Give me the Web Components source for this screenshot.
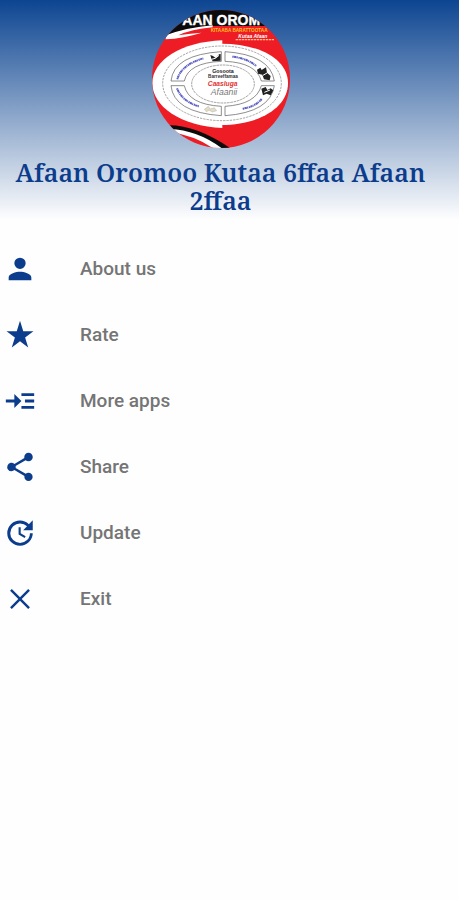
<!DOCTYPE html>
<html lang="om">
<head>
<meta charset="utf-8">
<meta name="viewport" content="width=device-width, initial-scale=1">
<title>Afaan Oromoo Kutaa 6ffaa</title>
<style>
  body {
    margin: 0;
    background: #fefefe;
    font-family: Roboto, sans-serif;
  }
</style>
</head>
<body>
<app-drawer>
  <drawer-header slot="header">Afaan Oromoo Kutaa 6ffaa Afaan 2ffaa</drawer-header>
  <drawer-item icon="person">About us</drawer-item>
  <drawer-item icon="star">Rate</drawer-item>
  <drawer-item icon="more">More apps</drawer-item>
  <drawer-item icon="share">Share</drawer-item>
  <drawer-item icon="update">Update</drawer-item>
  <drawer-item icon="close">Exit</drawer-item>
</app-drawer>

<script>
const ICONS = {
  person: '<path d="M12 12a4 4 0 1 0 0-8 4 4 0 0 0 0 8zm0 2c-2.67 0-8 1.34-8 4v2h16v-2c0-2.66-5.33-4-8-4z"/>',
  star: '<path d="M12 2l2.300 7.400H21.500l-5.900 4.300 2.200 7.100L12 16.400l-5.800 4.400 2.200-7.100L2.500 9.400h7.200z"/>',
  more: '<path d="M2 11h6V7l5 5-5 5v-4H2zM13 6.500h9v2h-9zM15.500 11H22v2h-6.500zM13 15.500h9v2h-9z"/>',
  share: '<path d="M18 16.080c-.76 0-1.440.3-1.960.77L8.910 12.700c.05-.23.09-.46.09-.7s-.04-.47-.09-.7l7.050-4.110c.54.5 1.250.81 2.040.81a3 3 0 1 0-3-3c0 .24.04.47.09.7L8.040 9.810A3 3 0 1 0 6 15c.79 0 1.500-.31 2.040-.81l7.120 4.160c-.05.21-.08.43-.08.65A2.920 2.920 0 1 0 18 16.080z"/>',
  update: '<path d="M21 10.120h-6.780l2.740-2.820a7.020 7.020 0 0 0-9.800-.1 6.880 6.880 0 0 0 0 9.790 7.020 7.020 0 0 0 9.800 0C18.320 15.650 19 14.080 19 12.100h2c0 1.980-.88 4.550-2.640 6.290a9.050 9.050 0 0 1-12.720 0 8.850 8.850 0 0 1-.02-12.570 9 9 0 0 1 12.650 0L21 3v7.120zM12.500 8v4.250l3.500 2.080-.72 1.210L11 13V8h1.500z"/>',
  close: '<path d="M19 6.200L17.800 5 12 10.800 6.200 5 5 6.200l5.800 5.800L5 17.800 6.200 19l5.800-5.800 5.800 5.800 1.200-1.200-5.800-5.800z"/>'
};

class AppDrawer extends HTMLElement {
  constructor() {
    super();
    this.attachShadow({ mode: 'open' });
    this.shadowRoot.innerHTML = `
      <style>
        :host {
          display: block;
          min-height: 100vh;
        }
        nav {
          display: flex;
          flex-direction: column;
          padding-top: 16px;
        }
      </style>
      <slot name="header"></slot>
      <nav><slot></slot></nav>
    `;
  }
}

class BookLogo extends HTMLElement {
  constructor() {
    super();
    this.attachShadow({ mode: 'open' });
    this.shadowRoot.innerHTML = `
      <style>
        :host {
          display: block;
          width: 138px;
          height: 138px;
          border-radius: 50%;
          overflow: hidden;
        }
        svg {
          display: block;
          width: 100%;
          height: 100%;
        }
      </style>
      <svg viewBox="33 30 414 414" aria-hidden="true" font-family="Liberation Sans, sans-serif" font-weight="bold">
        <rect x="30" y="25" width="425" height="425" fill="#ee1c24"/>
        <!-- cover title band -->
        <path d="M30 25H455V78H215Q150 80 78 106L60 110z" fill="#0b0b0b"/>
        <path d="M215 76Q140 82 74 106L74 118Q125 116 182 98Q150 100 112 106Q150 88 215 82z" fill="#fff"/>
        <text x="124" y="75" font-size="42" fill="#fff" stroke="#fff" stroke-width="1">AAN OROM</text>
        <text x="209" y="95" font-size="14" fill="#ffc221">KITAABA BARATTOOTAA</text>
        <text x="292" y="113" font-size="15" fill="#fff" font-style="italic">Kutaa Afaan</text>
        <path d="M284 119H400" stroke="#ffc18a" stroke-width="4" stroke-dasharray="7 2"/>
        <!-- oval chart, the halves sit slightly apart -->
        <path d="M244 121C120 126 34 181 34 250S120 380 244 384z" fill="#fff"/>
        <path d="M240 131C360 131 441 180 441 250S360 375 240 375z" fill="#fff"/>
        <g fill="none" stroke="#777" stroke-width="2">
          <ellipse cx="243" cy="250" rx="178" ry="112" stroke-dasharray="7 3"/>
          <path d="M241 155V184Q142 188 130 243H90Q98 164 241 155z" stroke="#555"/>
          <path d="M252 155V184Q346 188 361 243H400Q388 164 252 155z" stroke="#555"/>
          <path d="M90 257H130Q142 313 241 319V347Q98 337 90 257z" stroke="#555"/>
          <path d="M400 257H361Q346 313 252 319V347Q388 337 400 257z" stroke="#555"/>
          <ellipse cx="246" cy="252" rx="94" ry="57" stroke-dasharray="8 2"/>
        </g>
        <g fill="none" stroke="#5c60c4" stroke-width="6" stroke-dasharray="4 1 7 1 3 2">
          <path d="M109 238Q120 195 187 175"/>
          <path d="M274 170Q316 174 346 198"/>
          <path d="M108 265Q124 305 174 319"/>
          <path d="M305 326Q343 320 362 297"/>
        </g>
        <g fill="#222">
          <path d="M208 165l8 3 8 6 10-11 5-1v20l-24 2-4-8z"/>
          <path d="M348 209l10-6 4 7 13-8 3 16 11 10-3 13-17-3-5-14-13-3z"/>
          <path d="M361 266l13-5 5 9 10-5 8 6-8 15-12-5-11 5z"/>
        </g>
        <path d="M211 178l12-3 11-9M366 226l12-7M370 277l17-7" stroke="#fff" stroke-width="3" fill="none"/>
        <path d="M190 328l12-9 6 8 12-4 7 9-13 4-9-5-9 4z" fill="#e4dcc4" stroke="#999"/>
        <g text-anchor="middle">
          <text x="246" y="219" font-size="16" fill="#222">Gosoota</text>
          <text x="246" y="233" font-size="14" fill="#333">Barreeffamaa</text>
          <text x="245" y="257" font-size="20" fill="#e33432" font-style="italic">Caasluga</text>
          <text x="249" y="284" font-size="26" fill="#777" font-style="italic" font-weight="normal">Afaanii</text>
        </g>
        <path d="M80 376Q165 374 270 446H240Q174 397 88 388z" fill="#0b0b0b"/>
        <path d="M86 387Q170 390 244 446H218Q165 408 90 396z" fill="#fff"/>
        <path d="M100 410Q130 412 166 434L150 430z" fill="#ffb321"/>
      </svg>
    `;
  }
}

class DrawerHeader extends HTMLElement {
  constructor() {
    super();
    this.attachShadow({ mode: 'open' });
    this.shadowRoot.innerHTML = `
      <style>
        :host {
          display: flex;
          flex-direction: column;
          align-items: center;
          gap: 10px;
          padding: 10px 18px 6px 0;
          background: linear-gradient(#0d4591, #fefefe);
        }
        h1 {
          margin: 0;
          padding: 0 8px;
          color: #0c3c8c;
          font: 600 25px/28px "Noto Serif", "Droid Serif", "DejaVu Serif", serif;
          text-align: center;
        }
      </style>
      <book-logo></book-logo>
      <h1><slot></slot></h1>
    `;
  }
}

class DrawerItem extends HTMLElement {
  constructor() {
    super();
    this.attachShadow({ mode: 'open' });
    this.shadowRoot.innerHTML = `
      <style>
        :host {
          display: block;
        }
        button {
          display: flex;
          align-items: center;
          gap: 43px;
          width: 100%;
          height: 66px;
          padding: 0 3px;
          border: 0;
          background: none;
          color: #757575;
          font: 500 19px/24px Roboto, sans-serif;
          text-align: left;
          cursor: pointer;
        }
        svg {
          flex: none;
          width: 34px;
          height: 34px;
          fill: #0c3c8c;
        }
      </style>
      <button type="button">
        <svg viewBox="0 0 24 24" aria-hidden="true">${ICONS[this.getAttribute('icon')]}</svg>
        <span><slot></slot></span>
      </button>
    `;
  }
}

customElements.define('book-logo', BookLogo);
customElements.define('drawer-header', DrawerHeader);
customElements.define('drawer-item', DrawerItem);
customElements.define('app-drawer', AppDrawer);
</script>
</body>
</html>
